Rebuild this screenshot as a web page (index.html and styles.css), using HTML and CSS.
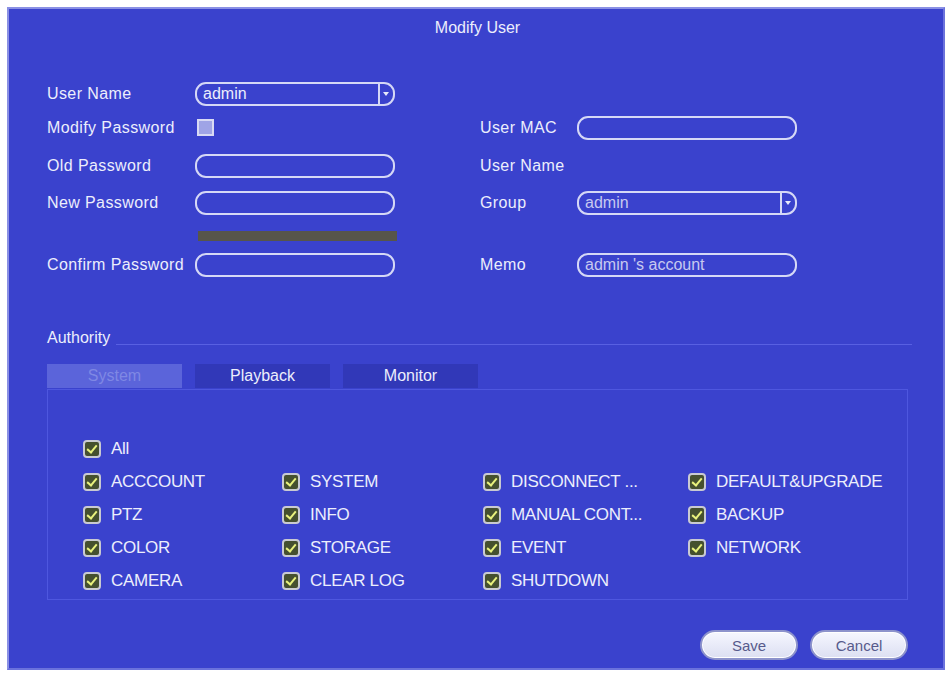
FILE: index.html
```html
<!DOCTYPE html>
<html lang="en">
<head>
  <meta charset="UTF-8">
  <title>Modify User</title>
  <link rel="stylesheet" href="styles.css">
</head>
<body>

<div class="dialog">
  <div class="title">Modify User</div>

  <!-- user fields -->
  <div class="form-grid">
    <div class="label">User Name</div>
    <div class="field select"><span class="value">admin</span><span class="arrow"></span></div>
    <div></div>
    <div></div>
    <div></div>

    <div class="label">Modify Password</div>
    <div><span class="plain-box"></span></div>
    <div></div>
    <div class="label">User MAC</div>
    <div class="field wide"></div>

    <div class="label">Old Password</div>
    <div class="field"></div>
    <div></div>
    <div class="label">User Name</div>
    <div></div>

    <div class="label">New Password</div>
    <div class="field"></div>
    <div></div>
    <div class="label">Group</div>
    <div class="field wide select"><span class="value dim">admin</span><span class="arrow"></span></div>

    <div></div>
    <div><div class="strength"></div></div>
    <div></div>
    <div></div>
    <div></div>

    <div class="label">Confirm Password</div>
    <div class="field"></div>
    <div></div>
    <div class="label">Memo</div>
    <div class="field wide"><span class="value dim">admin 's account</span></div>
  </div>

  <!-- authority -->
  <div class="section-head">
    <span>Authority</span>
    <span class="rule"></span>
  </div>

  <div class="tabs">
    <div class="tab active">System</div>
    <div class="tab">Playback</div>
    <div class="tab">Monitor</div>
  </div>

  <div class="perm-box" id="perms">
    <label class="perm all"><span class="check"></span>All</label>
  </div>

  <div class="actions">
    <button class="btn">Save</button>
    <button class="btn">Cancel</button>
  </div>
</div>

<script>
  const perms = [
    "ACCCOUNT", "SYSTEM", "DISCONNECT ...", "DEFAULT&UPGRADE",
    "PTZ", "INFO", "MANUAL CONT...", "BACKUP",
    "COLOR", "STORAGE", "EVENT", "NETWORK",
    "CAMERA", "CLEAR LOG", "SHUTDOWN"
  ];

  const box = document.getElementById('perms');
  perms.forEach(p => {
    const el = document.createElement('label');
    el.className = 'perm';
    el.innerHTML = `<span class="check"></span>${p}`;
    box.appendChild(el);
  });
</script>

</body>
</html>
```

FILE: styles.css
```css
body {
  margin: 0;
  background: #ffffff;
  font-family: "Liberation Sans", Arial, sans-serif;
  color: #eceefc;
}

.dialog {
  margin: 7px 0 0 7px;
  width: 861px;
  height: 659px;
  background: #3a42cd;
  border: 2px solid #8a90e4;
  border-right-color: #6b72dc;
  border-bottom-color: #6b72dc;
  padding: 0 35px 0 38px;
}

.title {
  margin-top: 9px;
  line-height: 20px;
  text-align: center;
  font-size: 16px;
}

.form-grid {
  margin-top: 43px;
  display: grid;
  grid-template-columns: 148px 200px 85px 97px 220px;
  grid-template-rows: 34px 38px 37px 30px 32px 26px;
  align-items: start;
}

.label {
  font-size: 16px;
  line-height: 26px;
  letter-spacing: 0.4px;
  white-space: nowrap;
}

.field {
  margin-top: 1px;
  height: 24px;
  border: 2px solid #d5d8f6;
  border-radius: 11px;
  box-sizing: border-box;
  display: flex;
  align-items: center;
  padding-left: 6px;
  font-size: 16px;
}

.field.wide {
  width: 220px;
}

.value {
  flex: 1;
  line-height: 20px;
}

.value.dim {
  color: #c7c9f0;
}

.select .arrow {
  width: 13px;
  height: 100%;
  border-left: 2px solid #d5d8f6;
  position: relative;
}

.select .arrow::after {
  content: "";
  position: absolute;
  left: 3px;
  top: 8px;
  border-left: 3px solid transparent;
  border-right: 3px solid transparent;
  border-top: 4px solid #e8eafa;
}

.plain-box {
  display: block;
  width: 17px;
  height: 17px;
  margin: 4px 0 0 2px;
  background: #9fa4e6;
  border: 2px solid #d8daf4;
  box-sizing: border-box;
}

.strength {
  width: 199px;
  height: 10px;
  margin: 11px 0 0 3px;
  background: #57554a;
}

.section-head {
  margin-top: 50px;
  display: flex;
  align-items: flex-end;
  font-size: 16px;
  line-height: 20px;
}

.section-head .rule {
  flex: 1;
  margin: 0 -4px 3px 6px;
  border-bottom: 1px solid #5860e2;
}

.tabs {
  margin-top: 16px;
  display: flex;
  gap: 13px;
}

.tab {
  width: 135px;
  height: 24px;
  line-height: 24px;
  text-align: center;
  font-size: 16px;
  background: #3138b8;
}

.tab.active {
  background: #5b64da;
  color: #7f88e4;
}

.perm-box {
  margin-top: 1px;
  height: 211px;
  box-sizing: border-box;
  border: 1px solid #4e57df;
  padding: 42px 0 0 35px;
  display: grid;
  grid-template-columns: 199px 201px 205px auto;
  grid-auto-rows: 33px;
}

.perm {
  display: flex;
  align-items: center;
  gap: 10px;
  font-size: 17px;
  letter-spacing: -0.3px;
  white-space: nowrap;
}

.perm.all {
  grid-column: 1 / -1;
}

.check {
  width: 18px;
  height: 18px;
  box-sizing: border-box;
  border: 2px solid #c9cad2;
  border-radius: 4px;
  background: #45502f;
  position: relative;
  flex: none;
}

.check::after {
  content: "";
  position: absolute;
  left: 4px;
  top: 1px;
  width: 4px;
  height: 8px;
  border-right: 2px solid #e9f27d;
  border-bottom: 2px solid #e9f27d;
  transform: rotate(40deg);
}

.actions {
  margin-top: 30px;
  display: flex;
  justify-content: flex-end;
  gap: 12px;
}

.btn {
  width: 98px;
  height: 30px;
  border: 2px solid #8d93cc;
  border-radius: 15px;
  background: linear-gradient(#f6f7ff, #dcdff2);
  color: #575b8c;
  font-family: "Liberation Sans", Arial, sans-serif;
  font-size: 15px;
  box-shadow: inset 0 0 0 1px #ffffff;
}
```
